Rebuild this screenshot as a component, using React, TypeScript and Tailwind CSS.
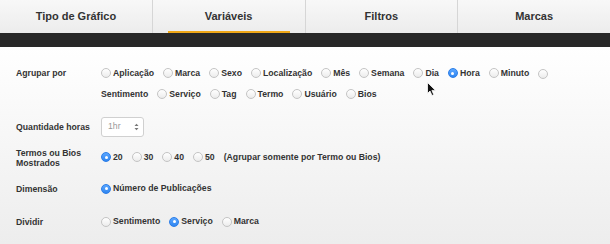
import React from 'react'

const font = { fontFamily: '"Liberation Sans", Arial, Helvetica, sans-serif' }

const tabs = ['Tipo de Gráfico', 'Variáveis', 'Filtros', 'Marcas']

function Radio({ checked }: { checked?: boolean }) {
  if (checked) {
    return (
      <span className="flex h-[10px] w-[10px] shrink-0 items-center justify-center rounded-full border border-[#2a7de8] bg-gradient-to-b from-[#5aa6ff] to-[#2f86f0]">
        <span className="h-[3px] w-[3px] rounded-full bg-white" />
      </span>
    )
  }
  return (
    <span className="h-[10px] w-[10px] shrink-0 rounded-full border border-[#c4c4c4] bg-gradient-to-b from-white to-[#ececec]" />
  )
}

function Option({ label, checked, bare }: { label?: string; checked?: boolean; bare?: boolean }) {
  return (
    <span className="flex items-center gap-[2px]">
      {!bare && <Radio checked={checked} />}
      {label && <span>{label}</span>}
    </span>
  )
}

function Row({ label, children, className = '' }: { label: React.ReactNode; children: React.ReactNode; className?: string }) {
  return (
    <div className={`flex items-center ${className}`}>
      <div className="w-[85px] shrink-0 leading-[10px]">{label}</div>
      <div className="flex items-center gap-[9px]">{children}</div>
    </div>
  )
}

export default function App() {
  return (
    <div className="relative h-[244px] w-[610px] overflow-hidden bg-white text-[#333]" style={font}>
      {/* Tabs */}
      <div className="flex h-[33px] bg-gradient-to-b from-[#f8f8f8] to-[#ececec]">
        {tabs.map((t, i) => (
          <div
            key={t}
            className={`relative flex flex-1 items-center justify-center text-[11px] font-bold text-[#333] ${i > 0 ? 'border-l border-[#d6d6d6]' : ''}`}
          >
            {t}
            {i === 1 && <span className="absolute bottom-0 left-[15px] right-[15px] h-[2px] bg-[#f0a818]" />}
          </div>
        ))}
      </div>
      <div className="h-[14px] bg-[#282828]" />

      {/* Content */}
      <div className="h-[197px] bg-gradient-to-b from-white to-[#ededed] pl-[16px] pt-[16px] text-[8.7px] font-bold">
        <div className="flex">
          <div className="flex h-[21px] w-[85px] shrink-0 items-center">Agrupar por</div>
          <div className="flex flex-col">
            <div className="flex h-[21px] items-center gap-[9px]">
              <Option label="Aplicação" />
              <Option label="Marca" />
              <Option label="Sexo" />
              <Option label="Localização" />
              <Option label="Mês" />
              <Option label="Semana" />
              <Option label="Dia" />
              <Option label="Hora" checked />
              <Option label="Minuto" />
              <Option />
            </div>
            <div className="flex h-[21px] items-center gap-[9px]">
              <Option label="Sentimento" bare />
              <Option label="Serviço" />
              <Option label="Tag" />
              <Option label="Termo" />
              <Option label="Usuário" />
              <Option label="Bios" />
            </div>
          </div>
        </div>

        <Row label="Quantidade horas" className="mt-[12px] h-[20px]">
          <div className="flex h-[20px] w-[43px] items-center justify-between rounded-[3px] border border-[#d0d0d0] bg-white pl-[6px] pr-[4px] font-normal text-[#999]">
            <span>1hr</span>
            <svg width="5" height="8" viewBox="0 0 5 8">
              <path d="M0.5 3 L2.5 0.8 L4.5 3 Z" fill="#777" />
              <path d="M0.5 5 L2.5 7.2 L4.5 5 Z" fill="#777" />
            </svg>
          </div>
        </Row>

        <Row
          label={
            <>
              Termos ou Bios
              <br />
              Mostrados
            </>
          }
          className="mt-[10px] h-[21px]"
        >
          <Option label="20" checked />
          <Option label="30" />
          <Option label="40" />
          <Option label="50" />
          <span>(Agrupar somente por Termo ou Bios)</span>
        </Row>

        <Row label="Dimensão" className="mt-[11px] h-[20px]">
          <Option label="Número de Publicações" checked />
        </Row>

        <Row label="Dividir" className="mt-[13px] h-[20px]">
          <Option label="Sentimento" />
          <Option label="Serviço" checked />
          <Option label="Marca" />
        </Row>
      </div>

      {/* mouse cursor */}
      <svg className="absolute left-[427px] top-[82px]" width="10" height="15" viewBox="0 0 10 15">
        <path d="M0.5 0.5 L0.5 11.5 L3 9 L5 13.5 L6.8 12.7 L4.9 8.4 L8.5 8.4 Z" fill="#111" stroke="#fff" strokeWidth="0.8" />
      </svg>
    </div>
  )
}
